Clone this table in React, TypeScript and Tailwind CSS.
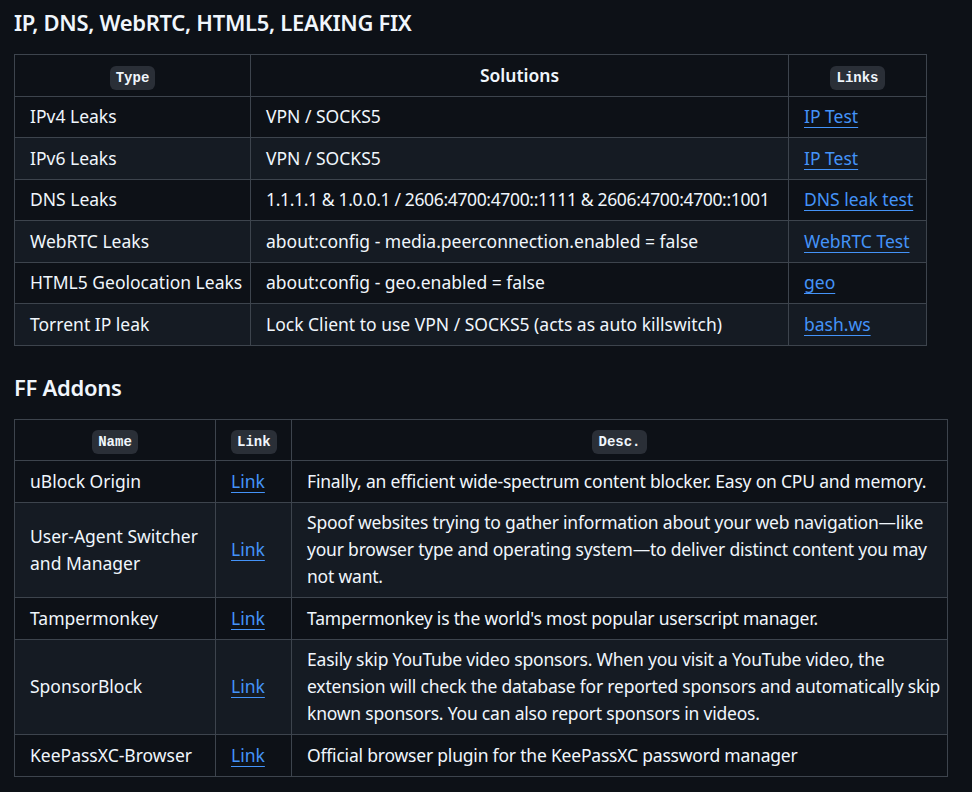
import React from "react";

const font = { fontFamily: '"Noto Sans", "Open Sans", sans-serif' };

const leaks = [
  { type: "IPv4 Leaks", sol: "VPN / SOCKS5", link: "IP Test" },
  { type: "IPv6 Leaks", sol: "VPN / SOCKS5", link: "IP Test" },
  {
    type: "DNS Leaks",
    sol: "1.1.1.1 & 1.0.0.1 / 2606:4700:4700::1111 & 2606:4700:4700::1001",
    link: "DNS leak test",
    tight: true,
  },
  {
    type: "WebRTC Leaks",
    sol: "about:config - media.peerconnection.enabled = false",
    link: "WebRTC Test",
  },
  {
    type: "HTML5 Geolocation Leaks",
    sol: "about:config - geo.enabled = false",
    link: "geo",
  },
  {
    type: "Torrent IP leak",
    sol: "Lock Client to use VPN / SOCKS5 (acts as auto killswitch)",
    link: "bash.ws",
  },
];

const addons = [
  {
    name: ["uBlock Origin"],
    desc: ["Finally, an efficient wide-spectrum content blocker. Easy on CPU and memory."],
  },
  {
    name: ["User-Agent Switcher", "and Manager"],
    desc: [
      "Spoof websites trying to gather information about your web navigation—like",
      "your browser type and operating system—to deliver distinct content you may",
      "not want.",
    ],
  },
  {
    name: ["Tampermonkey"],
    desc: ["Tampermonkey is the world's most popular userscript manager."],
  },
  {
    name: ["SponsorBlock"],
    desc: [
      "Easily skip YouTube video sponsors. When you visit a YouTube video, the",
      "extension will check the database for reported sponsors and automatically skip",
      "known sponsors. You can also report sponsors in videos.",
    ],
  },
  {
    name: ["KeePassXC-Browser"],
    desc: ["Official browser plugin for the KeePassXC password manager"],
  },
];

function Code({ children }: { children: React.ReactNode }) {
  return (
    <code
      className="rounded-[6px] bg-[#2a2f37] px-[6px] py-[4px] text-[14px] font-bold leading-none"
      style={{ fontFamily: '"Liberation Mono", "DejaVu Sans Mono", monospace' }}
    >
      {children}
    </code>
  );
}

const cell = "border border-[#3d444d] px-[15px] py-[6.75px] align-middle whitespace-nowrap";

function A({ children }: { children: React.ReactNode }) {
  return (
    <a href="#" className="text-[#4493f8] underline underline-offset-[4px] decoration-1">
      {children}
    </a>
  );
}

function Lines({ lines }: { lines: string[] }) {
  return (
    <>
      {lines.map((l, i) => (
        <React.Fragment key={i}>
          {i > 0 && <br />}
          {l}
        </React.Fragment>
      ))}
    </>
  );
}

export default function App() {
  return (
    <div
      className="min-h-screen bg-[#0d1117] px-[14px] pt-[8px] text-[17.5px] leading-[27px] text-[#f0f6fc]"
      style={font}
    >
      <h3 className="mb-[18px] text-[22px] font-semibold leading-[28px] tracking-[-0.3px]">
        IP, DNS, WebRTC, HTML5, LEAKING FIX
      </h3>
      <table className="w-[912px] table-fixed border-collapse">
        <colgroup>
          <col className="w-[236px]" />
          <col className="w-[538px]" />
          <col className="w-[138px]" />
        </colgroup>
        <thead>
          <tr>
            <th className={cell + " text-center"}>
              <Code>Type</Code>
            </th>
            <th className={cell + " text-center font-semibold"}>Solutions</th>
            <th className={cell + " text-center"}>
              <Code>Links</Code>
            </th>
          </tr>
        </thead>
        <tbody>
          {leaks.map((r, i) => (
            <tr key={i} className={i % 2 === 1 ? "bg-[#151b23]" : ""}>
              <td className={cell}>{r.type}</td>
              <td className={cell + (r.tight ? " tracking-[-0.35px]" : "")}>{r.sol}</td>
              <td className={cell}>
                <A>{r.link}</A>
              </td>
            </tr>
          ))}
        </tbody>
      </table>

      <h3 className="mb-[18px] mt-[27px] text-[22px] font-semibold leading-[28px] tracking-[-0.3px]">
        FF Addons
      </h3>
      <table className="w-[933px] table-fixed border-collapse">
        <colgroup>
          <col className="w-[201px]" />
          <col className="w-[76px]" />
          <col className="w-[656px]" />
        </colgroup>
        <thead>
          <tr>
            <th className={cell + " text-center"}>
              <Code>Name</Code>
            </th>
            <th className={cell + " text-center"}>
              <Code>Link</Code>
            </th>
            <th className={cell + " text-center"}>
              <Code>Desc.</Code>
            </th>
          </tr>
        </thead>
        <tbody>
          {addons.map((r, i) => (
            <tr key={i} className={i % 2 === 1 ? "bg-[#151b23]" : ""}>
              <td className={cell}>
                <Lines lines={r.name} />
              </td>
              <td className={cell}>
                <A>Link</A>
              </td>
              <td className={cell + " tracking-[-0.2px]"}>
                <Lines lines={r.desc} />
              </td>
            </tr>
          ))}
        </tbody>
      </table>
    </div>
  );
}
